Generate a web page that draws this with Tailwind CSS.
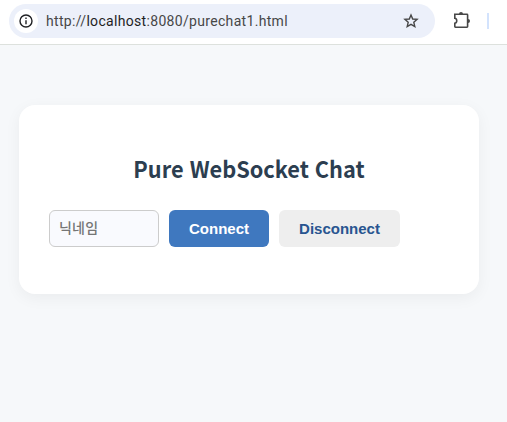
<!DOCTYPE html>
<html lang="ko">
<head>
    <meta charset="UTF-8">
    <meta name="viewport" content="width=device-width, initial-scale=1.0">
    <title>Pure WebSocket Chat</title>
    <script src="https://cdn.jsdelivr.net/npm/@tailwindcss/browser@4"></script>
</head>
<body class="h-screen overflow-hidden bg-[#f6f8fa]">
    <!-- Browser toolbar -->
    <header class="flex h-[45px] items-start border-b border-[#dde1dd] bg-white pl-[9px] pt-1">
        <div class="flex h-[34px] w-[426px] items-center rounded-full bg-[#ecf0fa] pl-[5px] pr-4">
            <span class="flex size-6 items-center justify-center rounded-full bg-white">
                <svg class="size-3.5" viewBox="0 0 14 14" fill="none" stroke="#202124" stroke-width="1.4">
                    <circle cx="7" cy="7" r="6"/>
                    <path d="M7 6.2v4M7 3.6v1.5"/>
                </svg>
            </span>
            <span class="ml-2 whitespace-nowrap font-['Roboto',sans-serif] text-[14px] tracking-[0.32px] text-[#474747]">http://<span class="text-[#1f1f1f]">localhost</span>:8080/purechat1.html</span>
            <svg class="ml-auto size-4" viewBox="0 0 16 16" fill="none" stroke="#474747" stroke-width="1.4">
                <path d="M8 2l1.7 4 4.4.4-3.3 2.9 1 4.3L8 11.3l-3.8 2.3 1-4.3L1.9 6.4l4.4-.4z"/>
            </svg>
        </div>
        <svg class="ml-[17px] mt-[7px] h-[18px] w-5" viewBox="0 0 20 18" fill="none" stroke="#474747" stroke-width="1.6">
            <path d="M2.8 3.3H15a.6.6 0 0 1 .6.6V15.6a.6.6 0 0 1-.6.6H3.4a.6.6 0 0 1-.6-.6V12.3c2.6-.4 2.6-4.6 0-5z"/>
            <path d="M7 3a2 2 0 0 1 4 0zM16 8a2 2 0 0 1 0 4z" fill="#474747" stroke="none"/>
        </svg>
        <span class="ml-[15px] mt-[9px] h-4 w-0.5 bg-[#d3e3fd]"></span>
    </header>

    <!-- Chat card -->
    <main class="ml-[19px] mt-[60px] h-[189px] w-[460px] rounded-2xl bg-white px-[30px] pt-[45px] shadow-[0_4px_16px_rgba(0,0,0,0.05)]">
        <h2 class="scale-x-[0.945] text-center font-['Noto_Sans_CJK_KR',sans-serif] text-[23px] leading-9 font-bold text-[#2c3e50]">Pure WebSocket Chat</h2>
        <div class="mt-6 flex gap-2.5">
            <input type="text" placeholder="닉네임" class="h-[37px] w-[110px] rounded-md border border-[#cccccc] bg-[#f9fafe] px-[9px] pb-[3px] font-['Noto_Sans_CJK_KR',sans-serif] text-[14px] font-medium tracking-[0.2px] placeholder:text-[#757575]">
            <button class="h-[37px] w-[100px] rounded-md bg-[#3f78bf] pt-px font-['Liberation_Sans',sans-serif] text-[15px] font-bold text-white">Connect</button>
            <button class="h-[37px] w-[121px] rounded-md bg-[#eeeeee] pt-px font-['Liberation_Sans',sans-serif] text-[15px] font-bold text-[#285590]">Disconnect</button>
        </div>
    </main>
</body>
</html>
